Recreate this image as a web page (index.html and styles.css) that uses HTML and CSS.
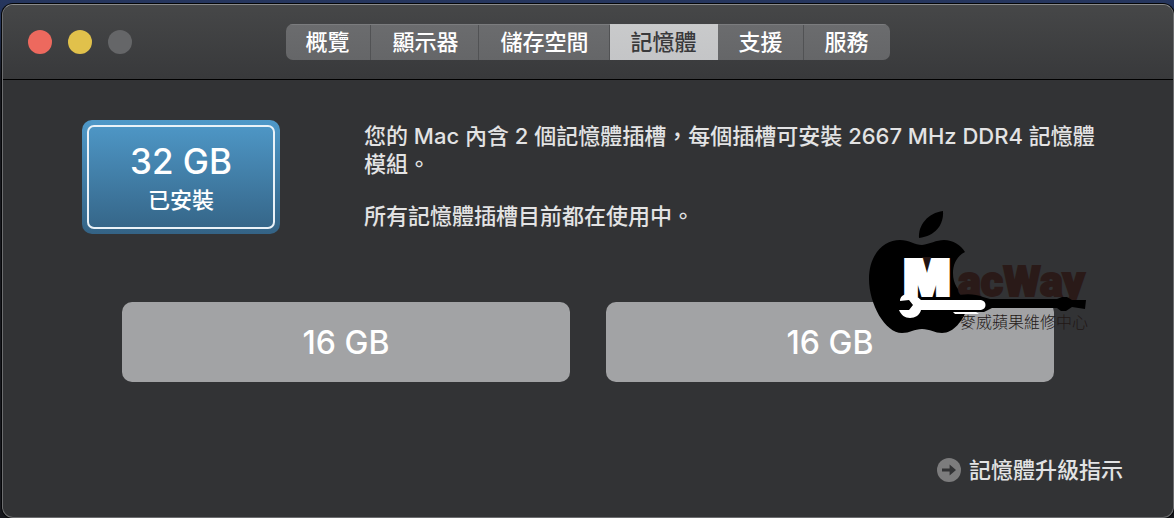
FILE: index.html
```html
<!DOCTYPE html>
<html lang="zh-Hant">
<head>
<meta charset="utf-8">
<meta name="viewport" content="width=device-width, initial-scale=1">
<title>記憶體</title>
<link rel="stylesheet" href="styles.css">
</head>
<body>
<div class="window">
  <header class="titlebar">
    <div class="lights">
      <button class="light light-close" type="button" aria-label="關閉"></button>
      <button class="light light-minimize" type="button" aria-label="縮到最小"></button>
      <button class="light light-zoom" type="button" aria-label="縮放" disabled></button>
    </div>
    <nav class="tabs">
      <button class="tab" type="button">概覽</button>
      <button class="tab" type="button">顯示器</button>
      <button class="tab" type="button">儲存空間</button>
      <button class="tab tab-active" type="button" aria-current="page">記憶體</button>
      <button class="tab" type="button">支援</button>
      <button class="tab" type="button">服務</button>
    </nav>
    <div></div>
  </header>
  <main class="content">
    <section class="summary">
      <div class="badge">
        <div class="badge-inner">
          <strong class="badge-size">32 GB</strong>
          <span class="badge-label">已安裝</span>
        </div>
      </div>
      <div class="info">
        <p>您的 Mac 內含 2 個記憶體插槽，每個插槽可安裝 2667 MHz DDR4 記憶體模組。</p>
        <p>所有記憶體插槽目前都在使用中。</p>
      </div>
    </section>
    <section class="slots">
      <div class="slot">16 GB</div>
      <div class="slot">16 GB</div>
    </section>
    <footer class="footer">
      <a class="guide" href="#">
        <svg class="guide-icon" viewBox="0 0 24 24" aria-hidden="true">
          <circle cx="12" cy="12" r="12" fill="#7c7c7d"/>
          <path d="M5 10.6h7.6V6.4L19 12l-6.4 5.6v-4.2H5z" fill="#323335"/>
        </svg>
        <span>記憶體升級指示</span>
      </a>
    </footer>
  </main>
  <svg class="watermark" viewBox="0 0 240 150" role="img" aria-label="MacWay 麥威蘋果維修中心">
    <path d="M83 11C84 25 75 36 59 38C58 25 68 13 83 11Z"/>
    <path d="M62 45C70 44 76 40 84 40C93 40 101 45 105 52C97 56 93 64 93 73C93 84 98 91 106 96L107 109C103 120 94 133 82 133C75 133 70 129 62 129C54 129 50 133 42 133C25 133 9 104 9 79C9 54 24 40 40 40C49 40 55 45 62 45Z"/>
    <path d="M62 57H71L80 95H76L68 72Z" fill="#211412"/>
    <text class="mark-name" x="98" y="96">acWay</text>
    <text class="mark-initial" x="67" y="95" text-anchor="middle">M</text>
    <path d="M95 97C103 93 115 94 123 97L130 99H197L202 97H207L212 100L226 100L225 109L212 107L206 111H201L197 108H132L124 112H95Z"/>
    <path d="M48 94C54 94 58 97 61 100H121C127 101 127 109 121 110H61C60 115 55 118 50 118C45 118 41 115 39 110L49 110L53 105L49 100L40 101C40 97 43 94 48 94Z" fill="#fff"/>
    <path d="M93 112H116L119 114H95Z" fill="#fff"/>
    <text class="mark-sub" x="100" y="128">麥威蘋果維修中心</text>
  </svg>
</div>
</body>
</html>
```
FILE: styles.css
```css
* {
  box-sizing: border-box;
}

body {
  margin: 0;
  min-height: 100vh;
  padding: 4px 0 0 2px;
  display: flex;
  background: linear-gradient(#26365e, #24345a 20px, #17181d 80px);
  font-family: Inter, "Noto Sans CJK TC", sans-serif;
  font-size: 22px;
  font-weight: 500;
  line-height: 28px;
  color: #e3e3e4;
}

.window {
  position: relative;
  flex: 1;
  display: flex;
  flex-direction: column;
  overflow: hidden;
  background: #323335;
  border: 1px solid #6c6d6f;
  border-top-color: #8a8b8c;
  border-radius: 11px;
  box-shadow: 0 0 0 1px #050608;
}

.titlebar {
  display: grid;
  grid-template-columns: 1fr auto 1fr;
  align-items: center;
  padding: 19px 25px;
  background: linear-gradient(#464748, #38393b);
  border-bottom: 1px solid #000;
}

.lights {
  display: flex;
  gap: 16px;
}

.light {
  width: 24px;
  height: 24px;
  padding: 0;
  border: 0;
  border-radius: 50%;
}

.light-close {
  background: #ed695e;
}

.light-minimize {
  background: #e1c14b;
}

.light-zoom {
  background: #656668;
}

.tabs {
  display: flex;
  overflow: hidden;
  border-radius: 7px;
}

.tab {
  height: 36px;
  padding: 0 21px;
  border: 0;
  background: linear-gradient(#6b6c6e, #656668);
  box-shadow: inset 0 1px #7b7c7e, inset -1px 0 #515254;
  color: #fff;
  font: inherit;
  white-space: nowrap;
}

.tab:first-child {
  padding: 0 22px 0 19px;
}

.tab:last-child {
  box-shadow: inset 0 1px #7b7c7e;
}

.tab-active {
  background: linear-gradient(#c9cacb, #c4c5c7);
  box-shadow: none;
  color: #39393b;
}

.content {
  flex: 1;
  display: flex;
  flex-direction: column;
  padding: 40px 50px 33px 79px;
}

.summary {
  display: flex;
  gap: 84px;
}

.badge {
  flex: none;
  width: 198px;
  padding: 5px;
  border-radius: 10px;
  background: linear-gradient(#4f99c9, #346385);
}

.badge-inner {
  display: flex;
  flex-direction: column;
  align-items: center;
  padding: 12px 0 10px;
  border: 2px solid #eaf2f8;
  border-radius: 7px;
  color: #fff;
}

.badge-size {
  font-size: 35px;
  font-weight: 500;
  line-height: 44px;
}

.badge-label {
  line-height: 34px;
}

.info {
  display: flex;
  flex-direction: column;
  gap: 24px;
  padding: 2px 16px 0 0;
}

.info p {
  margin: 0;
}

.slots {
  display: flex;
  gap: 36px;
  margin: 68px 69px 0 40px;
}

.slot {
  flex: 1;
  padding: 21px 0 19px;
  border-radius: 10px;
  background: #a2a3a5;
  color: #fff;
  font-size: 32px;
  line-height: 40px;
  text-align: center;
}

.footer {
  display: flex;
  justify-content: flex-end;
  margin-top: auto;
}

.guide {
  display: flex;
  align-items: center;
  gap: 8px;
  color: #e3e3e4;
  text-decoration: none;
}

.guide-icon {
  width: 24px;
  height: 24px;
}

.watermark {
  position: absolute;
  top: 195px;
  right: 73px;
  width: 240px;
  height: 150px;
}

.mark-name {
  fill: #2a1a18;
  stroke: #2a1a18;
  stroke-width: 2px;
  font-family: Roboto, "Liberation Sans", sans-serif;
  font-size: 43px;
  font-weight: 900;
}

.mark-initial {
  fill: #fff;
  stroke: #fff;
  stroke-width: 4px;
  font-size: 48px;
  font-weight: 900;
}

.mark-sub {
  fill: #211715;
  font-family: "Noto Sans CJK TC", sans-serif;
  font-size: 16px;
  font-weight: 300;
}
```
